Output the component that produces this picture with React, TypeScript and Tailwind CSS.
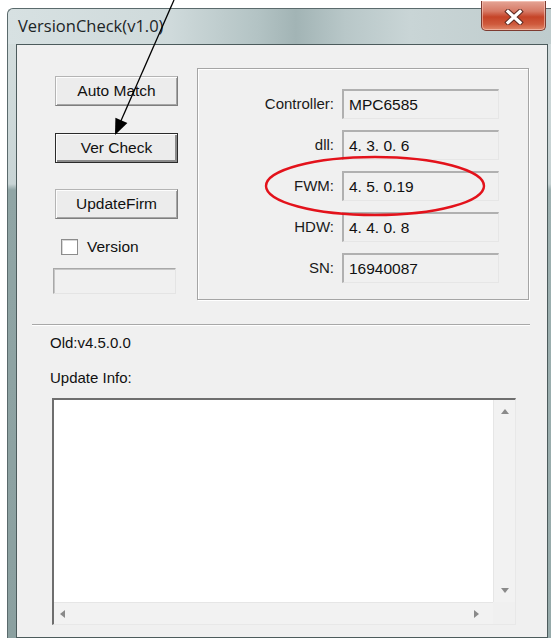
import React from 'react'

// Info rows shown in the right-hand group box
const infoRows = [
    { label: 'Controller:', value: 'MPC6585' },
    { label: 'dll:', value: '4. 3. 0. 6' },
    { label: 'FWM:', value: '4. 5. 0.19' },
    { label: 'HDW:', value: '4. 4. 0. 8' },
    { label: 'SN:', value: '16940087' },
]

const WinButton = ({ label, focused }: { label: string; focused?: boolean }) => (
    <div
        className={
            focused
                ? 'flex h-[30px] w-[123px] items-center justify-center border border-[#2a2a2a] bg-[#ececec] text-[15.5px] text-[#111] shadow-[inset_1px_1px_0_#fdfdfd,inset_-2px_-2px_0_#8a8a8a]'
                : 'flex h-[30px] w-[123px] items-center justify-center border border-[#b4b4b4] border-b-[#7e7e7e] border-r-[#7e7e7e] bg-[#ececec] text-[15.5px] text-[#111] shadow-[inset_1px_1px_0_#fdfdfd,inset_-1px_-1px_0_#a6a6a6]'
        }
    >
        {label}
    </div>
)

const Arrow = ({ dir }: { dir: 'up' | 'down' | 'left' | 'right' }) => {
    const pts = {
        up: '0,5 4,0 8,5',
        down: '0,0 8,0 4,5',
        left: '5,0 5,8 0,4',
        right: '0,0 0,8 5,4',
    }[dir]
    const vertical = dir === 'up' || dir === 'down'
    return (
        <svg width={vertical ? 8 : 5} height={vertical ? 5 : 8}>
            <polygon points={pts} fill="#8a8a8a" />
        </svg>
    )
}

// Aero-style close glyph: white X with a dark outline
const CloseGlyph = () => (
    <svg width="20" height="16" viewBox="0 0 20 16">
        <path d="M4 2.5 L16 13.5 M16 2.5 L4 13.5" stroke="#5b2a22" strokeWidth="5.2" strokeLinecap="square" />
        <path d="M4 2.5 L16 13.5 M16 2.5 L4 13.5" stroke="#ffffff" strokeWidth="3.2" strokeLinecap="square" />
    </svg>
)

const App = () => {
    return (
        <div className="relative h-[638px] w-[551px] overflow-hidden bg-white font-['Liberation_Sans',Arial,sans-serif]">
            {/* Window chrome */}
            <div className="ml-[7px] mt-[8px] flex h-[630px] w-[544px] flex-col rounded-tl-[6px] border-l border-t border-[#5a6a6c] bg-[#c7d3d4]">
                {/* Title bar */}
                <div className="flex h-[35px] shrink-0 items-center rounded-tl-[6px] bg-[linear-gradient(90deg,#d7e1e2_0%,#cfdadb_30%,#b3c3c4_46%,#a2b4b5_53%,#b8c7c8_62%,#c9d5d6_74%,#bfcccd_100%)] pl-[10px]">
                    <span className="font-['Open_Sans',Arial,sans-serif] text-[16.5px] text-[#1c2526]">VersionCheck(v1.0)</span>
                    <div className="ml-auto mr-[5px] -mt-[8px] flex h-[30px] w-[65px] items-center justify-center self-start rounded-b-[5px] border border-t-0 border-[#7d3b30] bg-[linear-gradient(180deg,#e4a596_0%,#d77a66_35%,#c54428_55%,#cf5a3c_80%,#e08a6c_100%)] pt-[2px] shadow-[inset_0_0_0_1px_rgba(255,220,210,0.5)]">
                        <CloseGlyph />
                    </div>
                </div>

                {/* Frame + client area */}
                <div className="flex flex-1">
                    <div className="w-[8px] bg-[linear-gradient(180deg,#d3dddd_0px,#c8d4d5_140px,#90a5a5_146px,#8ba0a0_100%)]" />
                    <div className="flex h-[594px] w-[532px] flex-col border border-[#4c5b5c] bg-[#f0f0f0] text-[15px] text-[#111]">
                        {/* Top section: buttons + info group */}
                        <div className="flex pl-[36px] pt-[23px]">
                            <div className="mt-[8px] flex w-[144px] flex-col">
                                <div className="ml-[2px]">
                                    <WinButton label="Auto Match" />
                                </div>
                                <div className="ml-[2px] mt-[27px]">
                                    <WinButton label="Ver Check" focused />
                                </div>
                                <div className="ml-[2px] mt-[26px]">
                                    <WinButton label="UpdateFirm" />
                                </div>
                                <div className="ml-[8px] mt-[20px] flex h-[16px] items-center gap-[9px]">
                                    <div className="h-[16px] w-[17px] border border-[#8c8c8c] bg-white shadow-[inset_1px_1px_0_#d8d8d8]" />
                                    <span className="text-[15.5px] leading-none">Version</span>
                                </div>
                                <div className="mt-[13px] h-[26px] w-[123px] border border-[#a8a8a8] border-b-[#e4e4e4] border-r-[#e4e4e4] bg-[#f0f0f0] shadow-[inset_1px_1px_0_#c6c6c6]" />
                            </div>

                            <div className="flex h-[232px] w-[332px] flex-col gap-[11px] border border-[#a5a5a5] pt-[20px] shadow-[1px_1px_0_#fff,inset_1px_1px_0_#fff]">
                                {infoRows.map((row) => (
                                    <div key={row.label} className="flex h-[30px] items-center gap-[8px]">
                                        <span className="w-[136px] text-right text-[15px] text-[#1a1a1a]">{row.label}</span>
                                        <div className="flex h-[30px] w-[157px] items-center border-l-2 border-t-2 border-b border-r border-l-[#b0b0b0] border-t-[#b0b0b0] border-b-[#e6e6e6] border-r-[#e6e6e6] bg-[#f0f0f0] pl-[5px] text-[15.5px] text-[#111]">
                                            {row.value}
                                        </div>
                                    </div>
                                ))}
                            </div>
                        </div>

                        {/* Etched separator */}
                        <div className="ml-[15px] mt-[24px] h-[2px] w-[498px] border-t border-b border-t-[#a8a8a8] border-b-white" />

                        <div className="ml-[33px] mt-[8px] leading-[17px]">Old:v4.5.0.0</div>
                        <div className="ml-[33px] mt-[18px] leading-[17px]">Update Info:</div>

                        {/* Update log text box with scrollbars */}
                        <div className="ml-[35px] mt-[12px] grid h-[227px] w-[464px] grid-cols-[1fr_22px] grid-rows-[1fr_22px] border-l-2 border-t-2 border-b border-r border-l-[#6e6e6e] border-t-[#6e6e6e] border-b-[#e8e8e8] border-r-[#e8e8e8] bg-white">
                            <div className="bg-white" />
                            <div className="flex flex-col items-center justify-between border-l border-[#e6e6e6] bg-[#f2f2f2] py-[9px]">
                                <Arrow dir="up" />
                                <Arrow dir="down" />
                            </div>
                            <div className="flex items-center justify-between border-t border-[#e6e6e6] bg-[#f2f2f2] pl-[6px] pr-[14px]">
                                <Arrow dir="left" />
                                <Arrow dir="right" />
                            </div>
                            <div className="bg-[#f0f0f0]" />
                        </div>
                    </div>
                    <div className="flex-1 bg-[linear-gradient(180deg,#cfd9da_0px,#c4d0d1_140px,#9db0b0_146px,#96aaaa_100%)]" />
                </div>
            </div>

            {/* Hand-drawn annotation: arrow pointing at Ver Check, ring round FWM */}
            <svg className="pointer-events-none absolute left-0 top-0" width="551" height="638">
                <line x1="174" y1="0" x2="120" y2="123" stroke="#000" strokeWidth="1.3" />
                <polygon points="115,135 115.4,117.7 127.4,122.9" fill="#000" />
                <ellipse cx="375" cy="186" rx="109" ry="29" fill="none" stroke="#e3121b" strokeWidth="2.4" />
            </svg>
        </div>
    )
}

export default App
